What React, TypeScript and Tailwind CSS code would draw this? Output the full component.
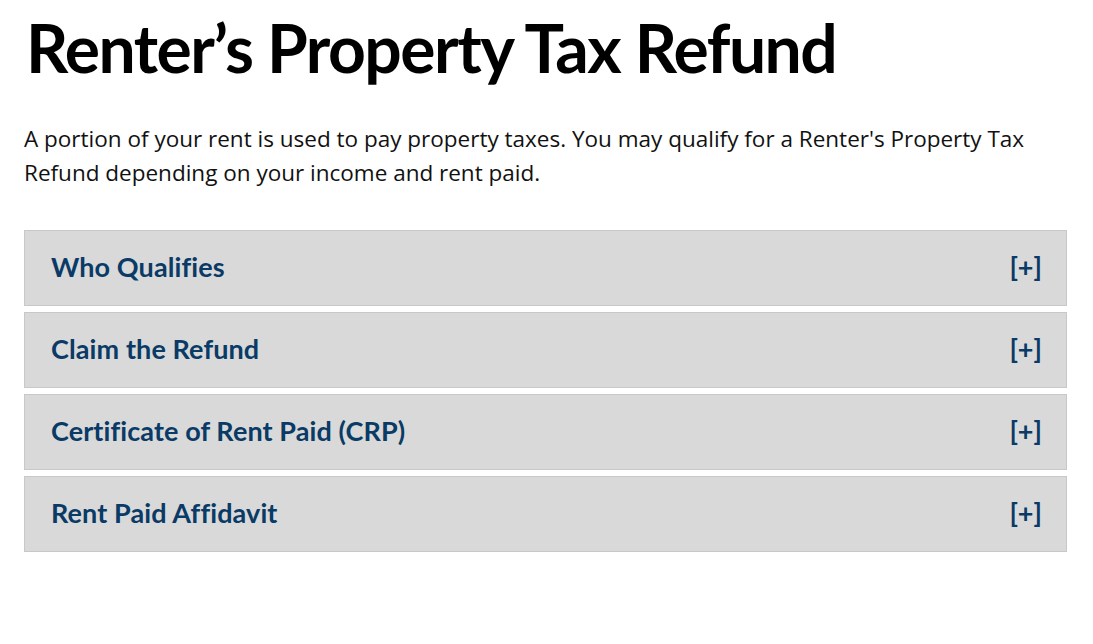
const sections = [
  "Who Qualifies",
  "Claim the Refund",
  "Certificate of Rent Paid (CRP)",
  "Rent Paid Affidavit",
];

const App = () => {
  return (
    <div className="min-h-screen bg-white pl-6 pr-[26px] pt-[8px]">
      {/* Heading */}
      <h1 className="font-['Lato',sans-serif] font-bold text-[66px] leading-[80px] text-black tracking-[-1.5px] pl-[2px]">
        Renter’s Property Tax Refund
      </h1>

      <p className="mt-[34px] font-['Open_Sans',sans-serif] text-[22.5px] leading-[34px] text-[#111]">
        A portion of your rent is used to pay property taxes. You may qualify for a Renter's Property Tax
        Refund depending on your income and rent paid.
      </p>

      {/* Accordion */}
      <div className="mt-[40px] flex flex-col gap-[6px]">
        {sections.map((title) => (
          <div
            key={title}
            className="h-[76px] bg-[#d9d9d9] border border-[#c8c8c8] flex items-center justify-between pl-[26px] pr-[24px] pb-[2px]"
          >
            <span className="font-['Lato',sans-serif] font-bold text-[27px] tracking-[0.1px] text-[#0a3a66]">
              {title}
            </span>
            <span className="font-['Lato',sans-serif] font-bold text-[27px] text-[#0a3a66]">[+]</span>
          </div>
        ))}
      </div>
    </div>
  );
};

export default App;
